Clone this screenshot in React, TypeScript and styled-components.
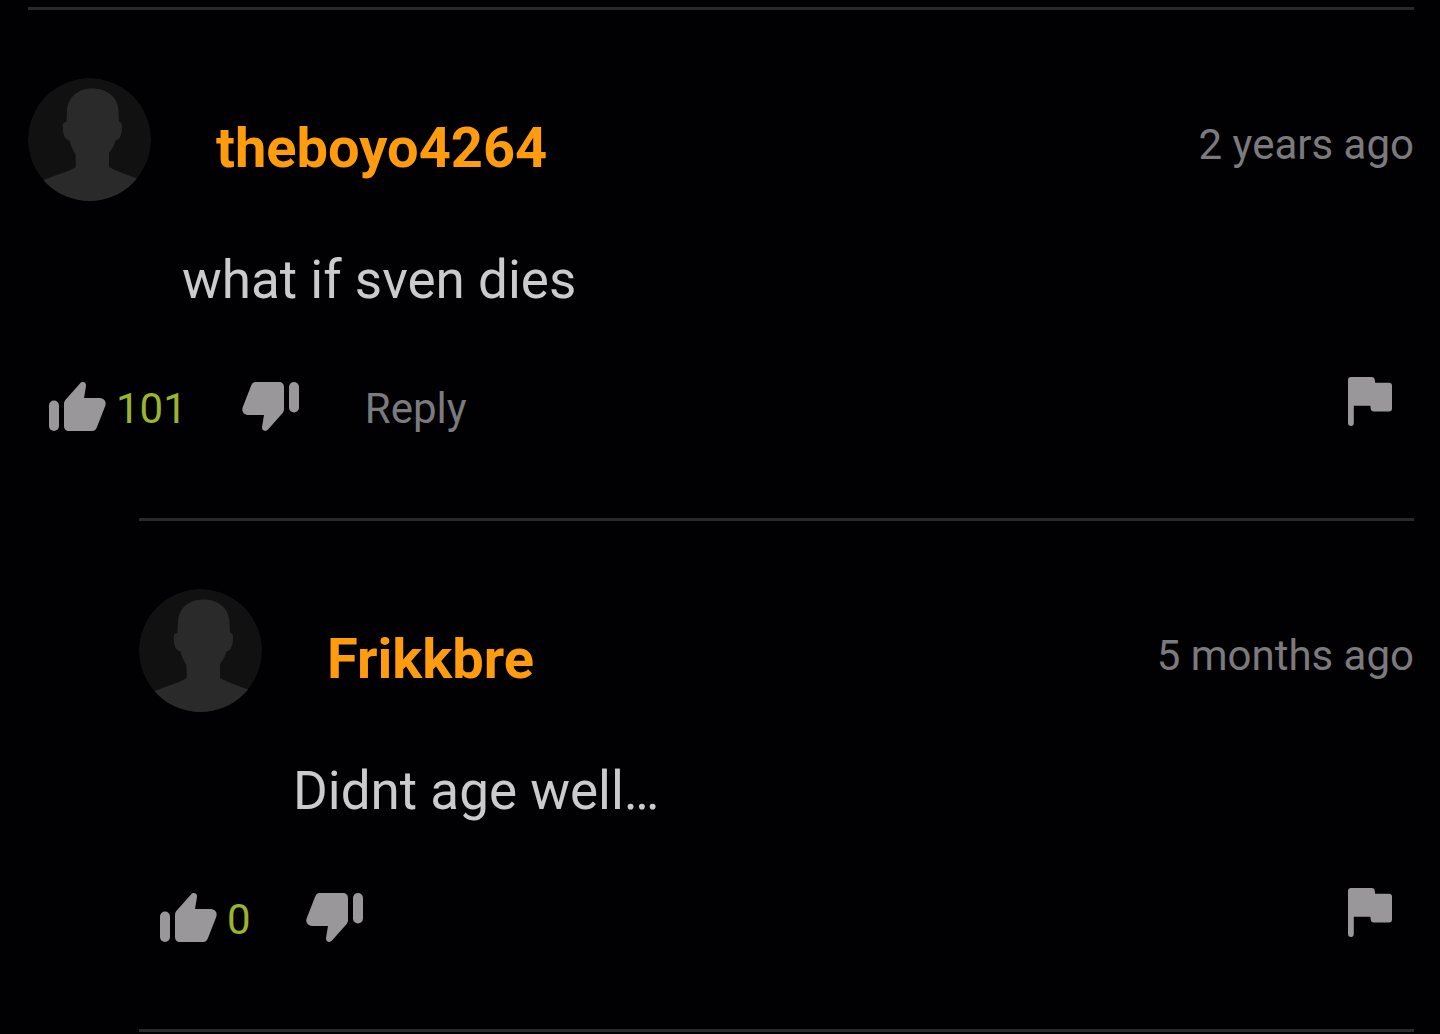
import React from "react";
import styled, { createGlobalStyle } from "styled-components";

const GlobalStyle = createGlobalStyle`
  *, *::before, *::after { box-sizing: border-box; }
  body {
    margin: 0;
    background: #010103;
    font-family: Roboto, "Liberation Sans", sans-serif;
    overflow-x: hidden;
  }
`;

const Thread = styled.main`
  padding: 7px 26px 0 28px;
`;

const CommentBlock = styled.article<{ $nested?: boolean }>`
  margin-left: ${(p) => (p.$nested ? "111px" : "0")};
  padding: 68px 0 85px;
  border-top: 3px solid #29292b;
`;

const ThreadEnd = styled.hr`
  margin: 0 0 0 111px;
  border: 0;
  border-top: 3px solid #29292b;
`;

const Header = styled.header`
  display: flex;
  align-items: flex-start;
`;

const AvatarSvg = styled.svg`
  display: block;
  flex: none;
  width: 123px;
  height: 123px;
  border-radius: 50%;
`;

const Author = styled.a`
  margin: 38px 0 0 65px;
  color: #ff9c0d;
  font-size: 56px;
  font-weight: 700;
  line-height: 64px;
  text-decoration: none;
`;

const Posted = styled.time`
  margin: 43px 0 0 auto;
  color: #7b7a7d;
  font-size: 42px;
  line-height: 48px;
  white-space: nowrap;
`;

const Message = styled.p`
  margin: 47px 0 0 154px;
  color: #cbcacc;
  font-size: 53px;
  line-height: 64px;
`;

const Actions = styled.footer`
  display: flex;
  align-items: flex-start;
  margin-top: 60px;
  padding: 0 22px 0 20px;
`;

const ActionButton = styled.button`
  display: flex;
  align-items: center;
  padding: 0;
  border: 0;
  background: none;
  color: #99979a;
  font: inherit;
  cursor: pointer;
`;

const VoteButton = styled(ActionButton)`
  margin-top: 8px;
`;

const FlagButton = styled(ActionButton)`
  margin: 5px 0 0 auto;
`;

const ReplyButton = styled(ActionButton)`
  margin: 13px 0 0 65px;
  color: #7b7a7d;
  font-size: 42px;
  line-height: 48px;
`;

const Score = styled.output`
  margin: 13px 54px 0 9px;
  color: #9ab42f;
  font-size: 42px;
  line-height: 48px;
`;

const ThumbSvg = styled.svg<{ $down?: boolean }>`
  display: block;
  width: 59px;
  height: 53px;
  transform: ${(p) => (p.$down ? "rotate(180deg)" : "none")};
`;

const FlagSvg = styled.svg`
  display: block;
  width: 44px;
  height: 49px;
`;

function Avatar() {
  return (
    <AvatarSvg viewBox="0 0 123 123" aria-hidden="true">
      <circle cx="61.5" cy="61.5" r="61.5" fill="#111112" />
      <path
        fill="#2a2a2b"
        d="M64.5 10.5C50 10.5 40 19 39 32L38.5 44C35.5 44 34.5 46 34.8 50C35 57 37 61.5 41.5 62.5C42.5 68 45 72 47.5 76L47.8 89C40 94 27 97 16 102V123H109V100.5C99 96.5 89 93.5 81 89V75C84 71 86.5 67 87.5 62.5C92 61.5 93.5 57 94 50C94.2 46 93.5 44 91 44L90.5 32C89.5 19 79 10.5 64.5 10.5Z"
      />
    </AvatarSvg>
  );
}

function Thumb({ down }: { down?: boolean }) {
  return (
    <ThumbSvg $down={down} viewBox="0 0 59 53" fill="currentColor" aria-hidden="true">
      <rect x="1" y="20.5" width="10" height="30.5" rx="5" />
      <path d="M16 24C16 22 16.7 20.7 18 19.3L32 3.5C34.3 0.8 38.5 2.2 38 6L36 18H51.5C56.3 18 58.8 21.8 57.2 26L48.8 47.5C47.8 50 46.5 51 44 51H21C18 51 16 49 16 46Z" />
    </ThumbSvg>
  );
}

function Flag() {
  return (
    <FlagSvg viewBox="0 0 44 49" fill="currentColor" aria-hidden="true">
      <path d="M3 0H23.5C25.7 0 26.5 1.3 26.8 3L27.2 5.7H41C43 5.7 44 6.7 44 8.7V31.5C44 33.5 43 34.5 41 34.5H26C24 34.5 23 33.5 22.8 32L22.3 28.7H5.8V46C5.8 48 4.8 49 3 49C1.2 49 0 48 0 46V3C0 1 1 0 3 0Z" />
    </FlagSvg>
  );
}

interface CommentProps {
  author: string;
  posted: string;
  text: string;
  score: number;
  nested?: boolean;
}

function Comment({ author, posted, text, score, nested }: CommentProps) {
  return (
    <CommentBlock $nested={nested}>
      <Header>
        <Avatar />
        <Author href={`#${author}`}>{author}</Author>
        <Posted>{posted}</Posted>
      </Header>
      <Message>{text}</Message>
      <Actions>
        <VoteButton type="button" aria-label="Like">
          <Thumb />
        </VoteButton>
        <Score>{score}</Score>
        <VoteButton type="button" aria-label="Dislike">
          <Thumb down />
        </VoteButton>
        {!nested && <ReplyButton type="button">Reply</ReplyButton>}
        <FlagButton type="button" aria-label="Report">
          <Flag />
        </FlagButton>
      </Actions>
    </CommentBlock>
  );
}

export default function App() {
  return (
    <>
      <GlobalStyle />
      <Thread>
        <Comment author="theboyo4264" posted="2 years ago" text="what if sven dies" score={101} />
        <Comment author="Frikkbre" posted="5 months ago" text="Didnt age well…" score={0} nested />
        <ThreadEnd />
      </Thread>
    </>
  );
}
